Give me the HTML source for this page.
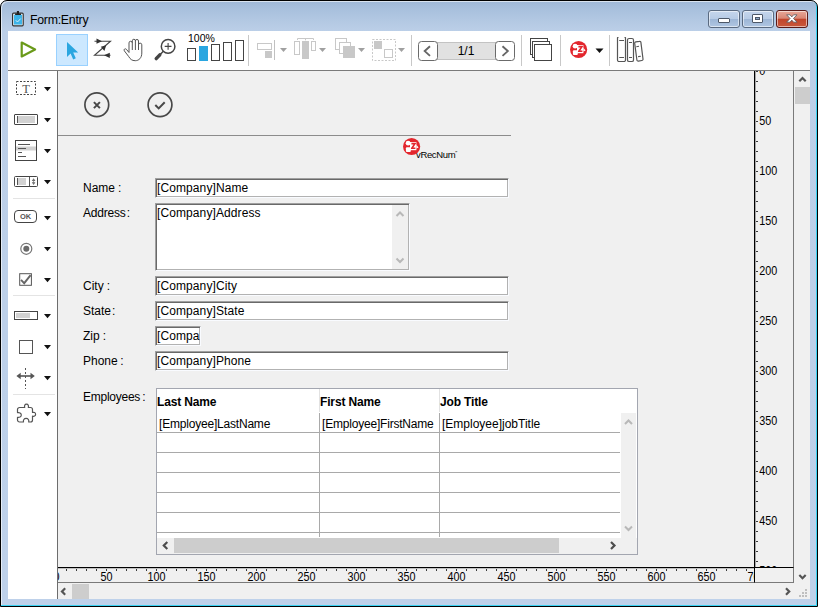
<!DOCTYPE html>
<html>
<head>
<meta charset="utf-8">
<title>Form:Entry</title>
<style>
*{box-sizing:border-box;margin:0;padding:0}
html,body{width:818px;height:607px;overflow:hidden;background:#fff}
body{font-family:"Liberation Sans",sans-serif;font-size:12px;color:#000;position:relative}
.abs{position:absolute}
#frame{position:absolute;left:0;top:0;width:818px;height:607px;background:linear-gradient(to bottom,#9fb8d7 0px,#a8c0dd 8px,#b5cae4 22px,#bccfe8 31px,#bed1ea 100%);border:1px solid #000;border-radius:7px 7px 0 0;box-shadow:inset -1px -1px 0 #3ad3f3,inset 1px 1px 0 rgba(255,255,255,.6)}
#title{position:absolute;left:30px;top:13px;font-size:12.300px;line-height:15px;color:#000;letter-spacing:-.25px}
#client{position:absolute;left:8px;top:31px;width:802px;height:568px;background:#fff;overflow:hidden}
#toolbar{position:absolute;left:0;top:0;width:802px;height:40px;background:#fff;border-bottom:1px solid #7a7a7a;z-index:5}
#palette{position:absolute;left:0;top:39px;width:50px;height:529px;background:#fff;border-right:1px solid #6d6d6d}
#canvas{position:absolute;left:50px;top:39px;width:697px;height:498px;background:#f0f0f0;overflow:hidden}
.sep{position:absolute;top:4px;width:1px;height:31px;background:#c8c8c8}
.lbl{position:absolute;font-size:12px;line-height:14px;white-space:nowrap;color:#000}
.fld{position:absolute;background:#fff;border:1px solid;border-color:#a0a0a0 #f9fbff #f9fbff #a0a0a0;box-shadow:inset 1px 1px 0 #696969,inset -1px -1px 0 #b2b2b2;font-size:12px;line-height:14px;white-space:nowrap;overflow:hidden;padding:2px 0 0 1px;letter-spacing:.1px}
.cb{position:absolute;height:19px}
.wbtn{position:absolute;top:10px;height:18px;border:1px solid #5a6a80;border-radius:3px;box-shadow:inset 0 0 0 1px rgba(255,255,255,.55)}
</style>
</head>
<body>
<div id="frame"></div>
<!-- title bar -->
<svg class="abs" style="left:11px;top:10px" width="16" height="18" viewBox="0 0 16 18">
  <rect x="1.600" y="3.100" width="10.600" height="12.700" rx="1" fill="#fff" stroke="#333" stroke-width="1.200"/>
  <rect x="2.900" y="4.700" width="8.100" height="9.900" fill="#3db4e8"/>
  <rect x="5.900" y="1" width="2.100" height="3" fill="#222"/>
  <rect x="4.100" y="3.500" width="5.900" height="1.500" fill="#222"/>
  <path d="M4.800 10.300l1.700 1.700l3.200-3.400" fill="none" stroke="#d8f0fb" stroke-width="1"/>
</svg>
<div id="title">Form:Entry</div>
<div class="wbtn" style="left:708px;width:32px;background:linear-gradient(#c5d6ec 0,#b7cbe5 48%,#9db6d6 52%,#b0c6e2 100%)"><div class="abs" style="left:9px;top:7px;width:12px;height:5px;background:#fff;border:1px solid #4d5868;border-radius:1px"></div></div>
<div class="wbtn" style="left:742px;width:32px;background:linear-gradient(#c5d6ec 0,#b7cbe5 48%,#9db6d6 52%,#b0c6e2 100%)"><div class="abs" style="left:9px;top:3px;width:11px;height:9px;background:#fff;border:1px solid #4d5868;border-radius:1px"><div class="abs" style="left:2px;top:2px;width:5px;height:3px;background:#8fa8c8;border:1px solid #4d5868"></div></div></div>
<div class="wbtn" style="left:776px;width:32px;border-color:#5a1a18;background:linear-gradient(#e8a898 0,#d98674 45%,#c1452b 52%,#c9583c 100%)">
  <svg class="abs" style="left:8px;top:2px" width="14" height="12" viewBox="0 0 14 12"><path d="M1.600 1.800h3.400l1.800 2.100l1.800-2.100h3.400l-3.500 3.700l3.500 3.700h-3.400l-1.800-2.100l-1.800 2.100h-3.400l3.500-3.700z" fill="#fff" stroke="#55585f" stroke-width=".8"/></svg>
</div>

<div id="client">
 <div id="toolbar">
  <!-- play -->
  <svg class="abs" style="left:10px;top:8px" width="22" height="22" viewBox="0 0 22 22"><path d="M3.700 3.600L17.100 10.500L3.700 17.400z" fill="none" stroke="#6a9a1a" stroke-width="2.200" stroke-linejoin="round"/></svg>
  <!-- selected arrow -->
  <div class="abs" style="left:48px;top:3px;width:32px;height:32px;background:#cce8ff;border:1px solid #99d1ff"></div>
  <svg class="abs" style="left:48px;top:3px" width="32" height="32" viewBox="0 0 32 32"><path d="M11 8v15l3.600-3.400l2.600 5.800l2.600-1.200l-2.600-5.600h5z" fill="#2aa6e0"/></svg>
  <!-- Z tab order -->
  <svg class="abs" style="left:84px;top:5px" width="26" height="28" viewBox="0 0 26 28"><path d="M2.500 5.200h16L2.500 19.300h16" fill="none" stroke="#444" stroke-width="1.100"/><path d="M4.500 2.600l5.500 2.600l-5.500 2.600zM14.200 9.200l-1.800 5.800l-3.600-4.200zM17.800 16.700l-5.800 2.600l5.800 2.600z" fill="#333"/></svg>
  <!-- hand -->
  <svg class="abs" style="left:113px;top:7px" width="24" height="26" viewBox="0 0 24 26"><path d="M8 14.500V4.900a1.650 1.650 0 0 1 3.300 0V12M11.300 4.900V2.800a1.550 1.550 0 0 1 3.100 0V12M14.400 3a1.550 1.550 0 0 1 3.100 0V12M17.500 6.800a1.650 1.650 0 0 1 3.300 0V15c0 5-3 7.700-6.500 7.700c-3.500 0-5-1.500-6.500-4L3.300 12.800c-.8-1.600 .9-2.700 2.100-1.500L8 14.500" fill="none" stroke="#555" stroke-width="1"/></svg>
  <!-- magnifier -->
  <svg class="abs" style="left:144px;top:7px" width="28" height="26" viewBox="0 0 28 26"><circle cx="16.100" cy="8.400" r="6.800" fill="#fff" stroke="#444" stroke-width="1.500"/><path d="M16.100 5v6.800M12.700 8.400h6.800" stroke="#444" stroke-width="1.100"/><path d="M11.300 13.300L7.500 17.200" stroke="#444" stroke-width="1.400"/><path d="M7.800 16.800L4.200 20.600" stroke="#444" stroke-width="3.400" stroke-linecap="round"/></svg>
  <!-- zoom bars -->
  <div class="abs" style="left:180px;top:2px;font-size:10.500px;line-height:11px">100%</div>
  <div class="abs" style="left:179px;top:17px;width:9px;height:13px;border:1px solid #444"></div>
  <div class="abs" style="left:191px;top:15px;width:9px;height:15px;background:#2aa6e0"></div>
  <div class="abs" style="left:203px;top:13px;width:9px;height:17px;border:1px solid #444"></div>
  <div class="abs" style="left:215px;top:11px;width:9px;height:19px;border:1px solid #444"></div>
  <div class="abs" style="left:227px;top:9px;width:9px;height:21px;border:1px solid #444"></div>
  <div class="sep" style="left:240px"></div>
  <!-- align icons (disabled) -->
  <svg class="abs" style="left:246px;top:4px" width="160" height="30" viewBox="0 0 160 30">
    <g fill="none" stroke="#c8c8c8" stroke-width="1">
      <rect x="3.500" y="8.500" width="14" height="6"/>
      <path d="M20.500 5v20" stroke="#c0c0c0"/>
      <rect x="40.500" y="6.500" width="5" height="13"/>
      <rect x="57.500" y="6.500" width="4" height="9"/>
      <path d="M43.500 5v-1.500h16v1.500M51.500 3.500v1.800"/>
      <rect x="81.500" y="3.500" width="11" height="11" fill="#fff"/>
      <rect x="85.500" y="7.500" width="11" height="11" fill="#fff"/>
      <rect x="118.500" y="4.500" width="23" height="21" stroke-dasharray="2 1.500"/>
      <rect x="130.500" y="14.500" width="8" height="8" fill="#fff"/>
    </g>
    <g fill="#c8c8c8">
      <rect x="11" y="16" width="7" height="7"/>
      <rect x="48" y="6" width="7" height="18"/>
      <rect x="89" y="11" width="12" height="12"/>
      <rect x="120" y="6" width="8" height="8"/>
    </g>
    <g fill="#a0a0a0">
      <path d="M26 13h7l-3.500 4z"/><path d="M65 13h7l-3.500 4z"/><path d="M104 13h7l-3.500 4z"/><path d="M144 13h7l-3.500 4z"/>
    </g>
  </svg>
  <div class="sep" style="left:403px"></div>
  <!-- page nav -->
  <div class="abs" style="left:428px;top:11px;width:62px;height:18px;background:#e1e1e1;border-top:1px solid #c3c3c3;border-bottom:1px solid #c3c3c3;text-align:center;font-size:12px;line-height:17px;padding-right:2px">1/1</div>
  <div class="abs" style="left:410px;top:10px;width:20px;height:20px;background:#fff;border:1px solid #6b6b6b;border-radius:3.500px"></div>
  <div class="abs" style="left:487px;top:10px;width:20px;height:20px;background:#fff;border:1px solid #6b6b6b;border-radius:3.500px"></div>
  <svg class="abs" style="left:410px;top:10px" width="98" height="20" viewBox="0 0 98 20"><path d="M12 5.300L6.700 10.100L12 14.900M84.500 5.300L89.800 10.100L84.500 14.900" fill="none" stroke="#666" stroke-width="1.900"/></svg>
  <div class="sep" style="left:513px"></div>
  <!-- pages -->
  <svg class="abs" style="left:520px;top:5px" width="26" height="28" viewBox="0 0 26 28"><g fill="#fff" stroke="#444" stroke-width="1"><rect x="2.500" y="2.500" width="17" height="16"/><rect x="4.500" y="5.500" width="17" height="16"/><rect x="6.500" y="8.500" width="17" height="16"/></g></svg>
  <div class="sep" style="left:552px"></div>
  <!-- red badge -->
  <svg class="abs" style="left:561px;top:9px" width="19" height="19" viewBox="0 0 19 19"><circle cx="9.600" cy="9.500" r="8.600" fill="#e3262d"/><rect x="8" y="5" width="6.400" height="8.200" fill="#fff"/><path d="M14.400 7.800l2.200 2.800l-2.200 .9z" fill="#fff"/><path d="M9.400 6.600h3.600l-3.200 4.700h3.600" fill="none" stroke="#e3262d" stroke-width="1.600"/><circle cx="6.100" cy="6.200" r="2.400" fill="#fff"/><rect x="3.900" y="10.300" width="4.900" height="4.700" rx="1" fill="#fff"/></svg>
  <svg class="abs" style="left:587px;top:17px" width="9" height="6" viewBox="0 0 9 6"><path d="M.5 .5h8L4.500 5z" fill="#111"/></svg>
  <div class="sep" style="left:601px"></div>
  <!-- books -->
  <svg class="abs" style="left:607px;top:4px" width="31" height="30" viewBox="0 0 31 30"><g fill="#fff" stroke="#555" stroke-width="1.200" stroke-linejoin="round"><path d="M3.500 2.500h-1V25a1.500 1.500 0 0 0 1.500 1.500H9a1.500 1.500 0 0 0 1.500-1.500V2.500h-1"/><rect x="12.500" y="3.500" width="6" height="23" rx="1.600"/><path d="M19.700 8.300a1.300 1.300 0 0 1 1.100-1.500l3.600-.5a1.300 1.300 0 0 1 1.500 1.100l2.100 16.600a1.300 1.300 0 0 1-1.100 1.500l-3.500 .6a1.300 1.300 0 0 1-1.500-1.100z"/></g><path d="M4.200 5.500h4.800M4.200 22.500h4.800M14 7.500h3M14 22.500h3M21.300 11.700l2.700-.4M23.100 21.600l2.700-.4" stroke="#555" stroke-width="1.100" fill="none"/></svg>
 </div>

 <div id="palette">
  <svg class="abs" style="left:7px;top:10px" width="22" height="16" viewBox="0 0 22 16"><rect x="1.500" y="1.500" width="19" height="13" fill="#fff" stroke="#444" stroke-width="1" stroke-dasharray="2 1.500"/><text x="11" y="12.700" text-anchor="middle" font-family="Liberation Serif,serif" font-size="12.500" fill="#555">T</text></svg>
  <svg class="abs" style="left:36px;top:17px" width="7" height="5" viewBox="0 0 7 5"><path d="M0 0h7L3.500 4.200z" fill="#111"/></svg>
  <div class="abs" style="left:6px;top:44px;width:24px;height:11px;border:1px solid #444;border-radius:1px;background:#fff"><div class="abs" style="left:2px;top:1px;width:18px;height:7px;background:#d2d2d2;border-left:1px solid #555"></div></div>
  <svg class="abs" style="left:36px;top:48px" width="7" height="5" viewBox="0 0 7 5"><path d="M0 0h7L3.500 4.200z" fill="#111"/></svg>
  <svg class="abs" style="left:6px;top:69px" width="24" height="23" viewBox="0 0 24 23"><rect x="1.500" y="1.500" width="21" height="20" fill="#fff" stroke="#444"/><rect x="2" y="7.500" width="20" height="4" fill="#d2d2d2"/><path d="M4 5.500h12M4 9.500h8M4 13.500h4M4 17.500h8" stroke="#555" stroke-width="1"/></svg>
  <svg class="abs" style="left:36px;top:79px" width="7" height="5" viewBox="0 0 7 5"><path d="M0 0h7L3.500 4.200z" fill="#111"/></svg>
  <svg class="abs" style="left:5px;top:105px" width="26" height="13" viewBox="0 0 26 13"><rect x="1.500" y="1.500" width="23" height="10" rx="1" fill="#fff" stroke="#444"/><rect x="5" y="3" width="8" height="7" fill="#d2d2d2"/><rect x="4" y="3" width="1" height="7" fill="#555"/><path d="M16.500 2v9" stroke="#555"/><path d="M18.800 6l1.800-2.800l1.800 2.800zM18.800 7.300l1.800 2.800l1.800-2.800z" fill="#666"/><path d="M20.600 4v5" stroke="#777" stroke-width=".8"/></svg>
  <svg class="abs" style="left:36px;top:110px" width="7" height="5" viewBox="0 0 7 5"><path d="M0 0h7L3.500 4.200z" fill="#111"/></svg>
  <div class="abs" style="left:5px;top:128px;width:42px;height:1px;background:#e4e4e4"></div>
  <div class="abs" style="left:6px;top:140px;width:23px;height:13px;border:1px solid #444;border-radius:4px;background:#fff;font-size:7.500px;line-height:11px;text-align:center;font-weight:bold;color:#555">OK</div>
  <svg class="abs" style="left:36px;top:146px" width="7" height="5" viewBox="0 0 7 5"><path d="M0 0h7L3.500 4.200z" fill="#111"/></svg>
  <svg class="abs" style="left:11px;top:171px" width="15" height="15" viewBox="0 0 15 15"><circle cx="7.300" cy="7.800" r="5.500" fill="#fff" stroke="#777" stroke-width="1.200"/><circle cx="7.300" cy="7.800" r="3" fill="#6a6a6a"/></svg>
  <svg class="abs" style="left:36px;top:177px" width="7" height="5" viewBox="0 0 7 5"><path d="M0 0h7L3.500 4.200z" fill="#111"/></svg>
  <svg class="abs" style="left:11px;top:202px" width="15" height="15" viewBox="0 0 15 15"><rect x=".7" y="1.700" width="11.700" height="11.600" fill="#fff" stroke="#555" stroke-width="1"/><path d="M2 7.900l3.200 3.300l6.400-8" fill="none" stroke="#666" stroke-width="1.900"/></svg>
  <svg class="abs" style="left:36px;top:208px" width="7" height="5" viewBox="0 0 7 5"><path d="M0 0h7L3.500 4.200z" fill="#111"/></svg>
  <div class="abs" style="left:5px;top:225px;width:42px;height:1px;background:#e4e4e4"></div>
  <div class="abs" style="left:6px;top:241px;width:24px;height:9px;border:1px solid #444;background:#fff"><div class="abs" style="left:1px;top:1px;width:14px;height:5px;background:#d2d2d2"></div></div>
  <svg class="abs" style="left:36px;top:244px" width="7" height="5" viewBox="0 0 7 5"><path d="M0 0h7L3.500 4.200z" fill="#111"/></svg>
  <div class="abs" style="left:11px;top:270px;width:14px;height:14px;border:1px solid #555;background:#fff"></div>
  <svg class="abs" style="left:36px;top:275px" width="7" height="5" viewBox="0 0 7 5"><path d="M0 0h7L3.500 4.200z" fill="#111"/></svg>
  <svg class="abs" style="left:7px;top:296px" width="22" height="24" viewBox="0 0 22 24"><path d="M10.500 2v21" stroke="#555" stroke-dasharray="2 2" stroke-width="1"/><path d="M4 10h13" stroke="#555" stroke-width="1.600"/><path d="M1.400 10l4.300-3.200v6.400zM19.800 10l-4.300-3.200v6.400z" fill="#555"/></svg>
  <svg class="abs" style="left:36px;top:306px" width="7" height="5" viewBox="0 0 7 5"><path d="M0 0h7L3.500 4.200z" fill="#111"/></svg>
  <div class="abs" style="left:5px;top:324px;width:42px;height:1px;background:#e4e4e4"></div>
  <svg class="abs" style="left:7px;top:331px" width="24" height="24" viewBox="0 0 24 24"><path d="M4.500 6.500H9.700c-.5-1.500 0-3.300 1.800-3.300s2.300 1.800 1.800 3.300H15.500a2 2 0 0 1 2 2V11.500c1.500-.5 3.100 0 3.100 1.800s-1.600 2.300-3.100 1.800V19a2 2 0 0 1-2 2H13.700c.5-1.800-.5-3.700-2.600-3.700s-3.100 1.900-2.600 3.700H4.500a2 2 0 0 1-2-2V16.300c1.800 .5 3.800-.3 3.800-2.300s-2-2.800-3.800-2.300V8.500a2 2 0 0 1 2-2z" fill="#fff" stroke="#555" stroke-width="1.200" stroke-linejoin="round"/></svg>
  <svg class="abs" style="left:36px;top:342px" width="7" height="5" viewBox="0 0 7 5"><path d="M0 0h7L3.500 4.200z" fill="#111"/></svg>
 </div>
 <div id="canvas">
  <svg class="abs" style="left:25px;top:21px" width="28" height="28" viewBox="0 0 28 28"><circle cx="13.800" cy="13.700" r="11.900" fill="none" stroke="#484848" stroke-width="1.700"/><path d="M10.900 11.100l6 6M16.900 11.100l-6 6" stroke="#484848" stroke-width="2"/></svg>
  <svg class="abs" style="left:88px;top:21px" width="28" height="28" viewBox="0 0 28 28"><circle cx="14" cy="13.700" r="11.900" fill="none" stroke="#484848" stroke-width="1.700"/><path d="M9.300 14l3.400 3.400l6-6.200" fill="none" stroke="#484848" stroke-width="2"/></svg>
  <div class="abs" style="left:0;top:65px;width:453px;height:1px;background:#8c8c8c"></div>
  <div class="abs" style="left:358px;top:78px;font-size:9.500px;line-height:11px;white-space:nowrap;letter-spacing:-.35px">vRecNum<span style="font-size:6px;vertical-align:3px">&#8221;</span></div>
  <svg class="abs" style="left:344px;top:67px" width="19" height="19" viewBox="0 0 19 19"><circle cx="9.600" cy="9.500" r="8.600" fill="#e3262d"/><rect x="8" y="5" width="6.400" height="8.200" fill="#fff"/><path d="M14.400 7.800l2.200 2.800l-2.200 .9z" fill="#fff"/><path d="M9.400 6.600h3.600l-3.200 4.700h3.600" fill="none" stroke="#e3262d" stroke-width="1.600"/><circle cx="6.100" cy="6.200" r="2.400" fill="#fff"/><rect x="3.900" y="10.300" width="4.900" height="4.700" rx="1" fill="#fff"/></svg>
  <div class="lbl" style="left:25px;top:111px">Name<span style="margin-left:3px">:</span></div>
  <div class="lbl" style="left:25px;top:136px"><span style="letter-spacing:-.2px">Address</span><span style="margin-left:1px">:</span></div>
  <div class="lbl" style="left:25px;top:209px">City<span style="margin-left:3px">:</span></div>
  <div class="lbl" style="left:25px;top:234px">State<span style="margin-left:1px">:</span></div>
  <div class="lbl" style="left:25px;top:259px">Zip<span style="margin-left:3px">:</span></div>
  <div class="lbl" style="left:25px;top:284px">Phone<span style="margin-left:2.5px">:</span></div>
  <div class="lbl" style="left:25px;top:320px"><span style="letter-spacing:-.25px">Employees</span><span style="margin-left:2px">:</span></div>
  <div class="fld" style="left:97px;top:108px;width:354px;height:20px">[Company]Name</div>
  <div class="fld" style="left:97px;top:133px;width:255px;height:68px">[Company]Address<div class="abs" style="right:1px;top:1px;width:16px;height:64px;background:#f0f0f0"><svg class="abs" style="left:0;top:0" width="16" height="62" viewBox="0 0 16 62"><path d="M4.500 11l3.500-3.500l3.500 3.500M4.500 53.500l3.500 3.500l3.500-3.500" fill="none" stroke="#b8b8b8" stroke-width="2"/></svg></div></div>
  <div class="fld" style="left:97px;top:206px;width:354px;height:20px">[Company]City</div>
  <div class="fld" style="left:97px;top:231px;width:354px;height:20px">[Company]State</div>
  <div class="fld" style="left:97px;top:256px;width:46px;height:20px">[Compa</div>
  <div class="fld" style="left:97px;top:281px;width:354px;height:20px">[Company]Phone</div>
  <div class="abs" style="left:98px;top:318px;width:482px;height:167px;background:#fff;border:1px solid #a3a6b0;font-size:12px"><div class="abs" style="left:0;top:23px;width:463px;height:125px;overflow:hidden"><div class="abs" style="left:0;top:20px;width:464px;height:1px;background:#a9a9a9"></div><div class="abs" style="left:0;top:40px;width:464px;height:1px;background:#a9a9a9"></div><div class="abs" style="left:0;top:60px;width:464px;height:1px;background:#a9a9a9"></div><div class="abs" style="left:0;top:80px;width:464px;height:1px;background:#a9a9a9"></div><div class="abs" style="left:0;top:100px;width:464px;height:1px;background:#a9a9a9"></div><div class="abs" style="left:0;top:120px;width:464px;height:1px;background:#a9a9a9"></div></div><div class="abs" style="left:162px;top:0;width:1px;height:23px;background:#e2e2e2"></div><div class="abs" style="left:282px;top:0;width:1px;height:23px;background:#e2e2e2"></div><div class="abs" style="left:162px;top:24px;width:1px;height:124px;background:#a9a9a9"></div><div class="abs" style="left:282px;top:24px;width:1px;height:124px;background:#a9a9a9"></div><div class="abs" style="left:0px;top:6px;font-weight:bold;line-height:14px;white-space:nowrap;letter-spacing:-.15px">Last Name</div><div class="abs" style="left:163px;top:6px;font-weight:bold;line-height:14px;white-space:nowrap;letter-spacing:-.15px">First Name</div><div class="abs" style="left:283px;top:6px;font-weight:bold;line-height:14px;white-space:nowrap;letter-spacing:-.15px">Job Title</div><div class="abs" style="left:2px;top:28px;line-height:14px;white-space:nowrap;letter-spacing:-.2px">[Employee]LastName</div><div class="abs" style="left:165px;top:28px;line-height:14px;white-space:nowrap;letter-spacing:-.2px">[Employee]FirstName</div><div class="abs" style="left:285px;top:28px;line-height:14px;white-space:nowrap;">[Employee]jobTitle</div><div class="abs" style="left:464px;top:24px;width:15px;height:125px;background:#f0f0f0"><svg class="abs" style="left:0;top:0" width="15" height="125" viewBox="0 0 15 125"><path d="M4 11l3.500-3.500l3.500 3.500M4 113.500l3.500 3.500l3.500-3.500" fill="none" stroke="#b8b8b8" stroke-width="2"/></svg></div><div class="abs" style="left:0;top:149px;width:480px;height:16px;background:#f0f0f0"><div class="abs" style="left:17px;top:0;width:385px;height:15px;background:#cdcdcd"></div><svg class="abs" style="left:0;top:0" width="464" height="16" viewBox="0 0 464 16"><path d="M10.300 4l-3.500 3.500l3.500 3.500M454 4l3.500 3.500l-3.500 3.500" fill="none" stroke="#4d4d4d" stroke-width="2.200"/></svg></div></div>
 </div>
 <svg class="abs" style="left:746px;top:40px;background:#f0f0f0" width="40" height="496" viewBox="0 0 40 496"><rect x="0" y="0" width="1.300" height="496" fill="#000"/><rect x="39" y="0" width="1" height="496" fill="#7a7a7a"/><g fill="#3a3a3a"><rect x="2" y="0" width="2" height="1"/><rect x="2" y="10" width="2" height="1"/><rect x="2" y="20" width="2" height="1"/><rect x="2" y="30" width="2" height="1"/><rect x="2" y="40" width="2" height="1"/><rect x="2" y="50" width="2" height="1"/><rect x="2" y="60" width="2" height="1"/><rect x="2" y="70" width="2" height="1"/><rect x="2" y="80" width="2" height="1"/><rect x="2" y="90" width="2" height="1"/><rect x="2" y="100" width="2" height="1"/><rect x="2" y="110" width="2" height="1"/><rect x="2" y="120" width="2" height="1"/><rect x="2" y="130" width="2" height="1"/><rect x="2" y="140" width="2" height="1"/><rect x="2" y="150" width="2" height="1"/><rect x="2" y="160" width="2" height="1"/><rect x="2" y="170" width="2" height="1"/><rect x="2" y="180" width="2" height="1"/><rect x="2" y="190" width="2" height="1"/><rect x="2" y="200" width="2" height="1"/><rect x="2" y="210" width="2" height="1"/><rect x="2" y="220" width="2" height="1"/><rect x="2" y="230" width="2" height="1"/><rect x="2" y="240" width="2" height="1"/><rect x="2" y="250" width="2" height="1"/><rect x="2" y="260" width="2" height="1"/><rect x="2" y="270" width="2" height="1"/><rect x="2" y="280" width="2" height="1"/><rect x="2" y="290" width="2" height="1"/><rect x="2" y="300" width="2" height="1"/><rect x="2" y="310" width="2" height="1"/><rect x="2" y="320" width="2" height="1"/><rect x="2" y="330" width="2" height="1"/><rect x="2" y="340" width="2" height="1"/><rect x="2" y="350" width="2" height="1"/><rect x="2" y="360" width="2" height="1"/><rect x="2" y="370" width="2" height="1"/><rect x="2" y="380" width="2" height="1"/><rect x="2" y="390" width="2" height="1"/><rect x="2" y="400" width="2" height="1"/><rect x="2" y="410" width="2" height="1"/><rect x="2" y="420" width="2" height="1"/><rect x="2" y="430" width="2" height="1"/><rect x="2" y="440" width="2" height="1"/><rect x="2" y="450" width="2" height="1"/><rect x="2" y="460" width="2" height="1"/><rect x="2" y="470" width="2" height="1"/><rect x="2" y="480" width="2" height="1"/><rect x="2" y="490" width="2" height="1"/></g><g font-family="Liberation Sans,sans-serif" font-size="12" fill="#000"><text transform="translate(5.300 3.9) scale(.9 1)">0</text><text transform="translate(5.300 53.9) scale(.9 1)">50</text><text transform="translate(5.300 103.9) scale(.9 1)">100</text><text transform="translate(5.300 153.9) scale(.9 1)">150</text><text transform="translate(5.300 203.9) scale(.9 1)">200</text><text transform="translate(5.300 253.9) scale(.9 1)">250</text><text transform="translate(5.300 303.9) scale(.9 1)">300</text><text transform="translate(5.300 353.9) scale(.9 1)">350</text><text transform="translate(5.300 403.9) scale(.9 1)">400</text><text transform="translate(5.300 453.9) scale(.9 1)">450</text><text transform="translate(5.300 503.9) scale(.9 1)">500</text></g></svg>
 <svg class="abs" style="left:50px;top:536px;background:#f0f0f0" width="696" height="16" viewBox="0 0 696 16"><rect x="0" y="0" width="696" height="1.200" fill="#000"/><rect x="0" y="15" width="696" height="1" fill="#7a7a7a"/><g fill="#3a3a3a"><rect x="8" y="2" width="1" height="2"/><rect x="18" y="2" width="1" height="2"/><rect x="28" y="2" width="1" height="2"/><rect x="38" y="2" width="1" height="2"/><rect x="48" y="2" width="1" height="2"/><rect x="58" y="2" width="1" height="2"/><rect x="68" y="2" width="1" height="2"/><rect x="78" y="2" width="1" height="2"/><rect x="88" y="2" width="1" height="2"/><rect x="98" y="2" width="1" height="2"/><rect x="108" y="2" width="1" height="2"/><rect x="118" y="2" width="1" height="2"/><rect x="128" y="2" width="1" height="2"/><rect x="138" y="2" width="1" height="2"/><rect x="148" y="2" width="1" height="2"/><rect x="158" y="2" width="1" height="2"/><rect x="168" y="2" width="1" height="2"/><rect x="178" y="2" width="1" height="2"/><rect x="188" y="2" width="1" height="2"/><rect x="198" y="2" width="1" height="2"/><rect x="208" y="2" width="1" height="2"/><rect x="218" y="2" width="1" height="2"/><rect x="228" y="2" width="1" height="2"/><rect x="238" y="2" width="1" height="2"/><rect x="248" y="2" width="1" height="2"/><rect x="258" y="2" width="1" height="2"/><rect x="268" y="2" width="1" height="2"/><rect x="278" y="2" width="1" height="2"/><rect x="288" y="2" width="1" height="2"/><rect x="298" y="2" width="1" height="2"/><rect x="308" y="2" width="1" height="2"/><rect x="318" y="2" width="1" height="2"/><rect x="328" y="2" width="1" height="2"/><rect x="338" y="2" width="1" height="2"/><rect x="348" y="2" width="1" height="2"/><rect x="358" y="2" width="1" height="2"/><rect x="368" y="2" width="1" height="2"/><rect x="378" y="2" width="1" height="2"/><rect x="388" y="2" width="1" height="2"/><rect x="398" y="2" width="1" height="2"/><rect x="408" y="2" width="1" height="2"/><rect x="418" y="2" width="1" height="2"/><rect x="428" y="2" width="1" height="2"/><rect x="438" y="2" width="1" height="2"/><rect x="448" y="2" width="1" height="2"/><rect x="458" y="2" width="1" height="2"/><rect x="468" y="2" width="1" height="2"/><rect x="478" y="2" width="1" height="2"/><rect x="488" y="2" width="1" height="2"/><rect x="498" y="2" width="1" height="2"/><rect x="508" y="2" width="1" height="2"/><rect x="518" y="2" width="1" height="2"/><rect x="528" y="2" width="1" height="2"/><rect x="538" y="2" width="1" height="2"/><rect x="548" y="2" width="1" height="2"/><rect x="558" y="2" width="1" height="2"/><rect x="568" y="2" width="1" height="2"/><rect x="578" y="2" width="1" height="2"/><rect x="588" y="2" width="1" height="2"/><rect x="598" y="2" width="1" height="2"/><rect x="608" y="2" width="1" height="2"/><rect x="618" y="2" width="1" height="2"/><rect x="628" y="2" width="1" height="2"/><rect x="638" y="2" width="1" height="2"/><rect x="648" y="2" width="1" height="2"/><rect x="658" y="2" width="1" height="2"/><rect x="668" y="2" width="1" height="2"/><rect x="678" y="2" width="1" height="2"/><rect x="688" y="2" width="1" height="2"/></g><g font-family="Liberation Sans,sans-serif" font-size="12" fill="#000"><text transform="translate(-4.50 14) scale(.9 1)">0</text><text transform="translate(42.50 14) scale(.9 1)">50</text><text transform="translate(89.50 14) scale(.9 1)">100</text><text transform="translate(139.50 14) scale(.9 1)">150</text><text transform="translate(189.50 14) scale(.9 1)">200</text><text transform="translate(239.50 14) scale(.9 1)">250</text><text transform="translate(289.50 14) scale(.9 1)">300</text><text transform="translate(339.50 14) scale(.9 1)">350</text><text transform="translate(389.50 14) scale(.9 1)">400</text><text transform="translate(439.50 14) scale(.9 1)">450</text><text transform="translate(489.50 14) scale(.9 1)">500</text><text transform="translate(539.50 14) scale(.9 1)">550</text><text transform="translate(589.50 14) scale(.9 1)">600</text><text transform="translate(639.50 14) scale(.9 1)">650</text><text transform="translate(689.50 14) scale(.9 1)">700</text></g></svg>
 <div class="abs" style="left:746px;top:536px;width:40px;height:16px;background:#f0f0f0;border:1px solid #000;border-right-color:#7a7a7a;border-bottom-color:#7a7a7a"></div>
 <div class="abs" style="left:786px;top:40px;width:16px;height:512px;background:#f0f0f0"><div class="abs" style="left:1px;top:16px;width:15px;height:17px;background:#cdcdcd"></div><svg class="abs" style="left:0;top:0" width="16" height="512" viewBox="0 0 16 512"><path d="M5.300 10.200l3.200-3.200l3.200 3.200M5.300 504l3.200 3.200l3.200-3.200" fill="none" stroke="#555" stroke-width="2.200"/></svg></div>
 <div class="abs" style="left:50px;top:552px;width:752px;height:16px;background:#f0f0f0"><div class="abs" style="left:14px;top:1px;width:17px;height:15px;background:#cdcdcd"></div><svg class="abs" style="left:0;top:0" width="752" height="16" viewBox="0 0 752 16"><path d="M7.200 5.300l-3.200 3.200l3.200 3.200M728 5.300l3.200 3.200l-3.200 3.200" fill="none" stroke="#555" stroke-width="2.200"/><g fill="#bfbfbf"><rect x="747" y="6" width="2" height="2"/><rect x="747" y="9" width="2" height="2"/><rect x="747" y="12" width="2" height="2"/><rect x="744" y="9" width="2" height="2"/><rect x="744" y="12" width="2" height="2"/><rect x="741" y="12" width="2" height="2"/></g></svg></div>
</div>
</body>
</html>
